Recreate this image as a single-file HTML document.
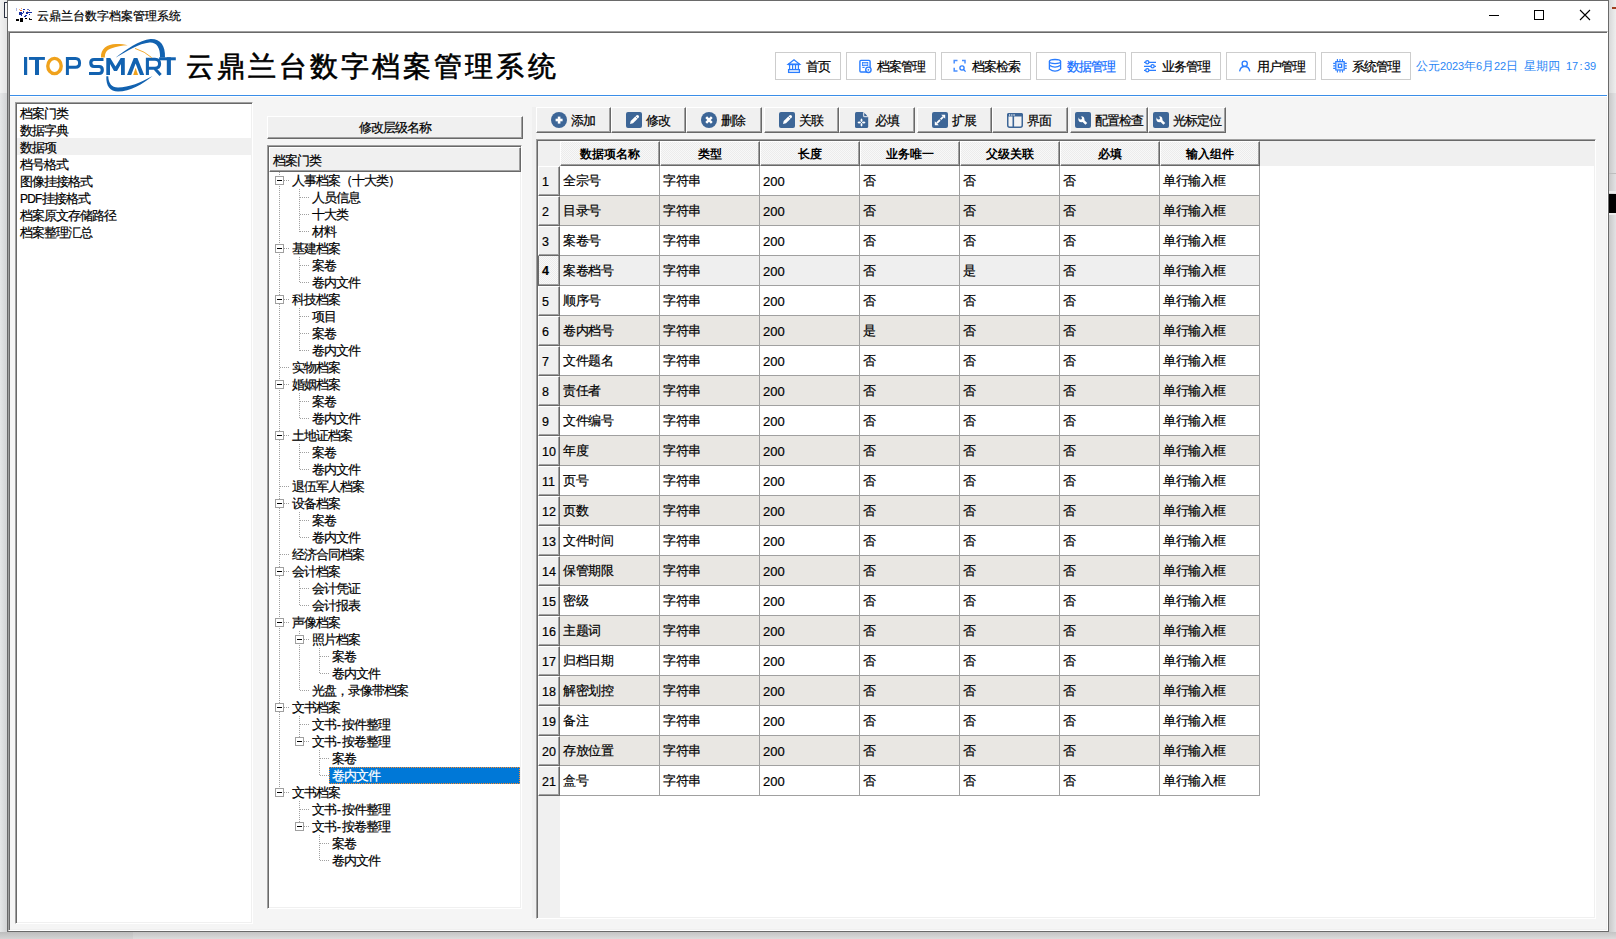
<!DOCTYPE html><html><head><meta charset="utf-8"><title>云鼎兰台数字档案管理系统</title><style>
html,body{margin:0;padding:0}
body{width:1616px;height:939px;position:relative;overflow:hidden;background:#e2e2e2;font-family:"Liberation Sans",sans-serif;font-size:12px;color:#000;-webkit-text-stroke:0.2px currentColor}
.a{position:absolute;box-sizing:border-box}
.t{position:absolute;white-space:nowrap;line-height:17px;font-size:13px;letter-spacing:-1px}
.l{font-size:13px;letter-spacing:0}
.l2{font-size:12px;letter-spacing:-0.8px;position:relative;top:-0.5px}
.nb{position:absolute;box-sizing:border-box;border:1px solid #cdcdcd;background:#fff;height:28px;top:52px}
.nb span{position:absolute;top:5px;line-height:17px;font-size:13px;letter-spacing:-1px;white-space:nowrap}
.nb svg{position:absolute}
.tb{position:absolute;box-sizing:border-box;top:107px;height:26px;background:#f0f0f0;border-top:1px solid #fff;border-left:1px solid #fff;box-shadow:inset -1px -1px 0 #a0a0a0;border-right:1px solid #696969;border-bottom:1px solid #696969}
.tb span{position:absolute;top:4px;line-height:17px;white-space:nowrap;font-size:13px;letter-spacing:-1px}
.tb svg{position:absolute;top:4px}
.tr{position:absolute;line-height:17px;height:17px;white-space:nowrap;font-size:13px;letter-spacing:-1px}
.hd{position:absolute;top:141px;height:25px;box-sizing:border-box;text-align:center;font-weight:bold;line-height:24px;font-size:12px;letter-spacing:0;-webkit-text-stroke:0;border-top:1px solid #fff;border-left:1px solid #fff;border-right:1px solid #696969;border-bottom:1px solid #696969;box-shadow:inset -1px -1px 0 #a0a0a0;background-color:#f4f4f4;background-image:repeating-conic-gradient(#ececec 0 25%,#f8f8f8 0 50%);background-size:2px 2px}
.ri{position:absolute;left:538px;width:22px;height:30px;box-sizing:border-box;background:#f0f0f0;border-top:1px solid #fff;border-left:1px solid #fff;border-right:1px solid #696969;border-bottom:1px solid #696969;box-shadow:inset -1px -1px 0 #a0a0a0;line-height:30px;padding-left:3px;font-size:12.5px}
.rw{position:absolute;left:560px;width:700px;height:30px}
.c{position:absolute;top:0;height:30px;width:100px;box-sizing:border-box;border-right:1px solid #a0a0a0;border-bottom:1px solid #a0a0a0;line-height:31px;padding-left:3px;white-space:nowrap;font-size:12.5px;letter-spacing:-0.5px}
</style></head><body>
<div class="a" style="left:0;top:0;width:7px;height:93px;background:linear-gradient(to right,#f2f2f2,#e4e4e4)"></div>
<div class="a" style="left:0;top:93px;width:7px;height:846px;background:linear-gradient(to right,#e6e7e8,#d2d3d4)"></div>
<div class="a" style="left:4px;top:2px;width:4px;height:16px;border:1px solid #2a3040;border-right:none;background:#f4f4f4"></div>
<div class="a" style="left:1609px;top:0;width:7px;height:93px;background:linear-gradient(to right,#d8d8d8,#eeeeee)"></div>
<div class="a" style="left:1609px;top:93px;width:7px;height:846px;background:linear-gradient(to right,#c8c8c8,#e2e2e4)"></div>
<div class="a" style="left:1609px;top:173px;width:7px;height:1px;background:#bdbdbd"></div>
<div class="a" style="left:1609px;top:191px;width:7px;height:2px;background:#ececec"></div>
<div class="a" style="left:1609px;top:194px;width:7px;height:19px;background:#000"></div>
<div class="a" style="left:1609px;top:213px;width:7px;height:2px;background:#ececec"></div>
<div class="a" style="left:1612px;top:7px;width:4px;height:2px;background:#a04020"></div>
<div class="a" style="left:0;top:932px;width:133px;height:7px;background:linear-gradient(to bottom,#bdbdbd,#d4d4d4)"></div>
<div class="a" style="left:133px;top:932px;width:1483px;height:7px;background:linear-gradient(to bottom,#c4c4c4,#dcdcdc)"></div>
<div class="a" style="left:7px;top:0;width:1602px;height:932px;border:1px solid #6a6a6a;background:#fff"></div>
<svg class="a" style="left:0;top:0" width="40" height="30"><rect x="16" y="8" width="1" height="3" fill="#aab4e0"/><rect x="19" y="9" width="1" height="1" fill="#f8b080"/><rect x="21" y="8" width="1" height="1" fill="#f4a070"/><rect x="20" y="10" width="2" height="1" fill="#f06020"/><rect x="19" y="12" width="3" height="3" fill="#1830a0"/><rect x="21" y="15" width="1" height="1" fill="#1830a0"/><rect x="23" y="11" width="1" height="2" fill="#2038a8"/><rect x="22" y="13" width="1" height="1" fill="#2038a8"/><rect x="23" y="9" width="2" height="1" fill="#1830a0"/><rect x="27" y="9" width="2" height="1" fill="#6070c0"/><rect x="29" y="10" width="1" height="1" fill="#3040a8"/><rect x="28" y="12" width="4" height="1" fill="#1830a0"/><rect x="26" y="12" width="2" height="2" fill="#1830a0"/><rect x="29" y="14" width="1" height="1" fill="#1830a0"/><rect x="25" y="15" width="2" height="1" fill="#2038a8"/><rect x="24" y="16" width="2" height="1" fill="#1830a0"/><rect x="27" y="11" width="1" height="1" fill="#f0a070"/><rect x="16" y="19" width="3" height="2" fill="#000"/><rect x="20" y="18" width="3" height="4" fill="#000"/><rect x="25" y="18" width="2" height="1" fill="#000"/><rect x="29" y="19" width="3" height="1" fill="#111"/><rect x="29" y="18" width="1" height="1" fill="#222"/></svg>
<div class="t" style="left:37px;top:8px;font-size:12px;letter-spacing:0">云鼎兰台数字档案管理系统</div>
<svg class="a" style="left:1480px;top:4px" width="120" height="24" viewBox="0 0 120 24"><rect x="9" y="11" width="10" height="1" fill="#000"/><rect x="54.5" y="6.5" width="9" height="9" fill="none" stroke="#000" stroke-width="1"/><path d="M100 6 L110 16 M110 6 L100 16" stroke="#000" stroke-width="1.1"/></svg>
<div class="a" style="left:8px;top:31px;width:1600px;height:900px;background:#f5f5f5;border-top:1px solid #a0a0a0;border-left:1px solid #a0a0a0;box-shadow:inset 1px 1px 0 #696969,inset -1px -1px 0 #f0f0f0;border-right:1px solid #fff;border-bottom:1px solid #fff"></div>
<div class="a" style="left:10px;top:33px;width:1597px;height:62px;background:#fff"></div>
<div class="a" style="left:10px;top:95px;width:1597px;height:1px;background:#3a8ee8"></div>
<div class="a" style="left:10px;top:96px;width:1597px;height:1px;background:#fff"></div>
<svg class="a" style="left:0;top:0" width="200" height="100" viewBox="0 0 200 100"><rect x="24" y="57" width="3.2" height="18" fill="#1262b0"/><rect x="28.9" y="57" width="16" height="2.9" fill="#1262b0"/><rect x="35" y="57" width="4" height="18" fill="#1262b0"/><ellipse cx="54.5" cy="66" rx="6.7" ry="7.6" fill="none" stroke="#f0a21c" stroke-width="3.4"/><path d="M67.4 75 V58.5 H75.5 Q79.6 58.5 79.6 63 Q79.6 67.3 75.5 67.3 H67.4" fill="none" stroke="#1262b0" stroke-width="3"/><path d="M103.5 59.5 H94 Q90.8 59.5 90.8 62.8 Q90.8 66.5 94 66.5 H99 Q102.3 66.5 102.3 70 Q102.3 73.5 99 73.5 H89" fill="none" stroke="#1262b0" stroke-width="3.2"/><path d="M106.3 75 V58 H110.3 L115.5 66.5 L120.7 58 H124.8 V75 H121 V64 L117 71 H114 L110 64 V75 Z" fill="#1262b0"/><path d="M127 75 L133.8 58 H137.4 L144.2 75 H140 L135.6 63.5 L131.2 75 Z" fill="#1262b0"/><path d="M133.2 75 L135.6 67.8 L138.1 75 Z" fill="#f0a21c"/><path d="M147.4 75 V59.3 H155 Q159.6 59.3 159.6 63.8 Q159.6 68.2 155 68.2 H147.4 M154.5 68.2 L160.6 75" fill="none" stroke="#1262b0" stroke-width="3.1"/><rect x="159.1" y="57.3" width="16.7" height="3" fill="#1262b0"/><rect x="166.8" y="57.3" width="4.1" height="17.7" fill="#1262b0"/><path d="M115.5 57.8 C125 50 140 40 150.5 39 C160 38.5 165.5 45 165 57.6 L160 57.6 C160.5 47 156 42 149.5 42.5 C139 43.5 127 51 115.5 57.8 Z" fill="#1262b0"/><path d="M106.3 76.2 C106 86 110 91.5 118 91.5 C130 91.5 143 84 152.5 76 C141 82.5 129 87.5 118 87.5 C111.5 87.5 108.5 83 108.3 76.2 Z" fill="#1262b0"/><path d="M101 57.6 C100.5 49 107 44 116 44 C121 44 125 44.5 127.8 45.3 C122 45.6 116 46.5 111 48.5 C106 50.5 105 53 104.8 57.6 Z" fill="#f0a21c"/><path d="M135 48.4 Q145 51.5 151.7 57.6" fill="none" stroke="#f0a21c" stroke-width="0.9"/></svg>
<div class="t" style="left:186px;top:47px;font-size:28px;line-height:40px;font-weight:normal;-webkit-text-stroke:0.6px #000;letter-spacing:3.05px">云鼎兰台数字档案管理系统</div>
<div class="nb" style="left:775px;width:66px"><span style="left:30px;color:#000">首页</span></div>
<div class="nb" style="left:846px;width:90px"><span style="left:30px;color:#000">档案管理</span></div>
<div class="nb" style="left:941px;width:90px"><span style="left:30px;color:#000">档案检索</span></div>
<div class="nb" style="left:1036px;width:90px"><span style="left:30px;color:#0f6dff">数据管理</span></div>
<div class="nb" style="left:1131px;width:90px"><span style="left:30px;color:#000">业务管理</span></div>
<div class="nb" style="left:1226px;width:90px"><span style="left:30px;color:#000">用户管理</span></div>
<div class="nb" style="left:1321px;width:90px"><span style="left:30px;color:#000">系统管理</span></div>
<svg class="a" style="left:0;top:0" width="1616" height="100" viewBox="0 0 1616 100"><path d="M788.3 64.3 L794 59.8 L799.7 64.3 Z" stroke="#2a7dff" fill="none" stroke-width="1.3"/><path d="M788 64.4 H800" stroke="#2a7dff" stroke-width="1.6"/><path d="M789.6 64.5 V69.5 M792.6 64.5 V69.5 M795.5 64.5 V69.5 M798.4 64.5 V69.5" stroke="#2a7dff" stroke-width="1.2"/><rect x="788.6" y="69.6" width="10.8" height="2.8" stroke="#2a7dff" fill="none" stroke-width="1.3"/><rect x="859.9" y="60.4" width="10.2" height="11.6" rx="1" stroke="#2a7dff" fill="none" stroke-width="1.4"/><rect x="862.4" y="62.4" width="5.4" height="3.2" fill="#b9d4ff" stroke="#2a7dff" stroke-width="0.8"/><path d="M862.4 67.4 H864.6" stroke="#2a7dff" stroke-width="1.2"/><circle cx="868.4" cy="69.8" r="2.7" fill="#fff" stroke="#2a7dff" stroke-width="1.4"/><circle cx="868.4" cy="69.8" r="0.9" fill="#2a7dff"/><path d="M954.2 63.6 V60.6 H957.5 M962 60.6 H965 V63.6 M954.2 67.8 V70.9 H957.5" stroke="#2a7dff" fill="none" stroke-width="1.5" opacity="0.85"/><circle cx="962" cy="68" r="2.1" stroke="#2a7dff" fill="none" stroke-width="1.3"/><path d="M963.5 69.5 L965.6 71.6" stroke="#2a7dff" stroke-width="1.3"/><ellipse cx="1055" cy="61.6" rx="5.6" ry="2.1" stroke="#2a7dff" fill="none" stroke-width="1.3"/><path d="M1049.4 61.6 V69 Q1055 73.2 1060.6 69 V61.6 M1049.4 65.3 Q1055 68.9 1060.6 65.3" stroke="#2a7dff" fill="none" stroke-width="1.3"/><path d="M1144 62.3 H1156 M1144 66.3 H1156 M1144 70.3 H1156" stroke="#2a7dff" stroke-width="1.2"/><circle cx="1147.3" cy="62.3" r="1.6" fill="#fff" stroke="#2a7dff" fill="none" stroke-width="1.3"/><circle cx="1152.6" cy="66.3" r="1.6" fill="#fff" stroke="#2a7dff" fill="none" stroke-width="1.3"/><circle cx="1147.3" cy="70.3" r="1.6" fill="#fff" stroke="#2a7dff" fill="none" stroke-width="1.3"/><circle cx="1244.7" cy="63.7" r="2.6" stroke="#2a7dff" fill="none" stroke-width="1.3"/><path d="M1239.6 71.3 Q1240.5 66.5 1244.7 66.5 Q1248.9 66.5 1249.8 71.3" stroke="#2a7dff" fill="none" stroke-width="1.3"/><rect x="1335.8" y="61.6" width="8.4" height="8.4" fill="#dbe9ff" stroke="#2a7dff" stroke-width="1.2"/><rect x="1338.4" y="64.2" width="3.2" height="3.2" fill="#fff" stroke="#2a7dff" stroke-width="1.2"/><path d="M1337.4 59 V61.3 M1340 59 V61.3 M1342.5 59 V61.3 M1337.4 70.3 V72.6 M1340 70.3 V72.6 M1342.5 70.3 V72.6 M1333.2 63.4 H1335.5 M1333.2 65.9 H1335.5 M1333.2 68.4 H1335.5 M1344.5 63.4 H1346.8 M1344.5 65.9 H1346.8 M1344.5 68.4 H1346.8" stroke="#2a7dff" stroke-width="1.1"/></svg>
<div class="a" style="left:1416px;top:58px;color:#2a86f5;-webkit-text-stroke:0;font-size:12px;line-height:17px;white-space:nowrap">公元<span style="display:inline-block;width:6px;text-align:center;font-size:11px">2</span><span style="display:inline-block;width:6px;text-align:center;font-size:11px">0</span><span style="display:inline-block;width:6px;text-align:center;font-size:11px">2</span><span style="display:inline-block;width:6px;text-align:center;font-size:11px">3</span>年<span style="display:inline-block;width:6px;text-align:center;font-size:11px">6</span>月<span style="display:inline-block;width:6px;text-align:center;font-size:11px">2</span><span style="display:inline-block;width:6px;text-align:center;font-size:11px">2</span>日<span style="display:inline-block;width:6px;text-align:center;font-size:11px">&nbsp;</span>星期四<span style="display:inline-block;width:6px;text-align:center;font-size:11px">&nbsp;</span><span style="display:inline-block;width:6px;text-align:center;font-size:11px">1</span><span style="display:inline-block;width:6px;text-align:center;font-size:11px">7</span><span style="display:inline-block;width:6px;text-align:center;font-size:11px">:</span><span style="display:inline-block;width:6px;text-align:center;font-size:11px">3</span><span style="display:inline-block;width:6px;text-align:center;font-size:11px">9</span></div>
<div class="a" style="left:15px;top:102px;width:238px;height:822px;background:#fff;border-top:1px solid #a0a0a0;border-left:1px solid #a0a0a0;box-shadow:inset 1px 1px 0 #696969,inset -1px -1px 0 #f0f0f0;border-right:1px solid #fff;border-bottom:1px solid #fff"></div>
<div class="t" style="left:20px;top:105px">档案门类</div>
<div class="t" style="left:20px;top:122px">数据字典</div>
<div class="a" style="left:17px;top:138px;width:235px;height:17px;background:#f0f0f0"></div>
<div class="t" style="left:20px;top:139px">数据项</div>
<div class="t" style="left:20px;top:156px">档号格式</div>
<div class="t" style="left:20px;top:173px">图像挂接格式</div>
<div class="t" style="left:20px;top:190px"><span class="l2">PDF</span>挂接格式</div>
<div class="t" style="left:20px;top:207px">档案原文存储路径</div>
<div class="t" style="left:20px;top:224px">档案整理汇总</div>
<div class="a" style="left:267px;top:116px;width:256px;height:23px;background:#f0f0f0;border-top:1px solid #fff;border-left:1px solid #fff;box-shadow:inset -1px -1px 0 #a0a0a0;border-right:1px solid #696969;border-bottom:1px solid #696969"></div>
<div class="t" style="left:267px;top:119px;width:256px;text-align:center">修改层级名称</div>
<div class="a" style="left:267px;top:145px;width:255px;height:764px;background:#fff;border-top:1px solid #a0a0a0;border-left:1px solid #a0a0a0;box-shadow:inset 1px 1px 0 #696969,inset -1px -1px 0 #f0f0f0;border-right:1px solid #fff;border-bottom:1px solid #fff"></div>
<div class="a" style="left:269px;top:147px;width:252px;height:25px;background:#f0f0f0;border-top:1px solid #fff;border-left:1px solid #fff;box-shadow:inset -1px -1px 0 #a0a0a0;border-right:1px solid #696969;border-bottom:1px solid #696969"></div>
<div class="t" style="left:273px;top:152px">档案门类</div>
<div class="a" style="left:279px;top:172px;width:1px;height:621px;background:repeating-linear-gradient(to bottom,#a0a0a0 0 1px,transparent 1px 2px)"></div><div class="a" style="left:299px;top:189px;width:1px;height:43px;background:repeating-linear-gradient(to bottom,#a0a0a0 0 1px,transparent 1px 2px)"></div><div class="a" style="left:299px;top:257px;width:1px;height:26px;background:repeating-linear-gradient(to bottom,#a0a0a0 0 1px,transparent 1px 2px)"></div><div class="a" style="left:299px;top:308px;width:1px;height:43px;background:repeating-linear-gradient(to bottom,#a0a0a0 0 1px,transparent 1px 2px)"></div><div class="a" style="left:299px;top:393px;width:1px;height:26px;background:repeating-linear-gradient(to bottom,#a0a0a0 0 1px,transparent 1px 2px)"></div><div class="a" style="left:299px;top:444px;width:1px;height:26px;background:repeating-linear-gradient(to bottom,#a0a0a0 0 1px,transparent 1px 2px)"></div><div class="a" style="left:299px;top:512px;width:1px;height:26px;background:repeating-linear-gradient(to bottom,#a0a0a0 0 1px,transparent 1px 2px)"></div><div class="a" style="left:299px;top:580px;width:1px;height:26px;background:repeating-linear-gradient(to bottom,#a0a0a0 0 1px,transparent 1px 2px)"></div><div class="a" style="left:299px;top:631px;width:1px;height:60px;background:repeating-linear-gradient(to bottom,#a0a0a0 0 1px,transparent 1px 2px)"></div><div class="a" style="left:319px;top:648px;width:1px;height:26px;background:repeating-linear-gradient(to bottom,#a0a0a0 0 1px,transparent 1px 2px)"></div><div class="a" style="left:299px;top:716px;width:1px;height:26px;background:repeating-linear-gradient(to bottom,#a0a0a0 0 1px,transparent 1px 2px)"></div><div class="a" style="left:319px;top:750px;width:1px;height:26px;background:repeating-linear-gradient(to bottom,#a0a0a0 0 1px,transparent 1px 2px)"></div><div class="a" style="left:299px;top:801px;width:1px;height:26px;background:repeating-linear-gradient(to bottom,#a0a0a0 0 1px,transparent 1px 2px)"></div><div class="a" style="left:319px;top:835px;width:1px;height:26px;background:repeating-linear-gradient(to bottom,#a0a0a0 0 1px,transparent 1px 2px)"></div><div class="a" style="left:280px;top:180px;width:9px;height:1px;background:repeating-linear-gradient(to right,#a0a0a0 0 1px,transparent 1px 2px)"></div><div class="a" style="left:300px;top:197px;width:9px;height:1px;background:repeating-linear-gradient(to right,#a0a0a0 0 1px,transparent 1px 2px)"></div><div class="a" style="left:300px;top:214px;width:9px;height:1px;background:repeating-linear-gradient(to right,#a0a0a0 0 1px,transparent 1px 2px)"></div><div class="a" style="left:300px;top:231px;width:9px;height:1px;background:repeating-linear-gradient(to right,#a0a0a0 0 1px,transparent 1px 2px)"></div><div class="a" style="left:280px;top:248px;width:9px;height:1px;background:repeating-linear-gradient(to right,#a0a0a0 0 1px,transparent 1px 2px)"></div><div class="a" style="left:300px;top:265px;width:9px;height:1px;background:repeating-linear-gradient(to right,#a0a0a0 0 1px,transparent 1px 2px)"></div><div class="a" style="left:300px;top:282px;width:9px;height:1px;background:repeating-linear-gradient(to right,#a0a0a0 0 1px,transparent 1px 2px)"></div><div class="a" style="left:280px;top:299px;width:9px;height:1px;background:repeating-linear-gradient(to right,#a0a0a0 0 1px,transparent 1px 2px)"></div><div class="a" style="left:300px;top:316px;width:9px;height:1px;background:repeating-linear-gradient(to right,#a0a0a0 0 1px,transparent 1px 2px)"></div><div class="a" style="left:300px;top:333px;width:9px;height:1px;background:repeating-linear-gradient(to right,#a0a0a0 0 1px,transparent 1px 2px)"></div><div class="a" style="left:300px;top:350px;width:9px;height:1px;background:repeating-linear-gradient(to right,#a0a0a0 0 1px,transparent 1px 2px)"></div><div class="a" style="left:280px;top:367px;width:9px;height:1px;background:repeating-linear-gradient(to right,#a0a0a0 0 1px,transparent 1px 2px)"></div><div class="a" style="left:280px;top:384px;width:9px;height:1px;background:repeating-linear-gradient(to right,#a0a0a0 0 1px,transparent 1px 2px)"></div><div class="a" style="left:300px;top:401px;width:9px;height:1px;background:repeating-linear-gradient(to right,#a0a0a0 0 1px,transparent 1px 2px)"></div><div class="a" style="left:300px;top:418px;width:9px;height:1px;background:repeating-linear-gradient(to right,#a0a0a0 0 1px,transparent 1px 2px)"></div><div class="a" style="left:280px;top:435px;width:9px;height:1px;background:repeating-linear-gradient(to right,#a0a0a0 0 1px,transparent 1px 2px)"></div><div class="a" style="left:300px;top:452px;width:9px;height:1px;background:repeating-linear-gradient(to right,#a0a0a0 0 1px,transparent 1px 2px)"></div><div class="a" style="left:300px;top:469px;width:9px;height:1px;background:repeating-linear-gradient(to right,#a0a0a0 0 1px,transparent 1px 2px)"></div><div class="a" style="left:280px;top:486px;width:9px;height:1px;background:repeating-linear-gradient(to right,#a0a0a0 0 1px,transparent 1px 2px)"></div><div class="a" style="left:280px;top:503px;width:9px;height:1px;background:repeating-linear-gradient(to right,#a0a0a0 0 1px,transparent 1px 2px)"></div><div class="a" style="left:300px;top:520px;width:9px;height:1px;background:repeating-linear-gradient(to right,#a0a0a0 0 1px,transparent 1px 2px)"></div><div class="a" style="left:300px;top:537px;width:9px;height:1px;background:repeating-linear-gradient(to right,#a0a0a0 0 1px,transparent 1px 2px)"></div><div class="a" style="left:280px;top:554px;width:9px;height:1px;background:repeating-linear-gradient(to right,#a0a0a0 0 1px,transparent 1px 2px)"></div><div class="a" style="left:280px;top:571px;width:9px;height:1px;background:repeating-linear-gradient(to right,#a0a0a0 0 1px,transparent 1px 2px)"></div><div class="a" style="left:300px;top:588px;width:9px;height:1px;background:repeating-linear-gradient(to right,#a0a0a0 0 1px,transparent 1px 2px)"></div><div class="a" style="left:300px;top:605px;width:9px;height:1px;background:repeating-linear-gradient(to right,#a0a0a0 0 1px,transparent 1px 2px)"></div><div class="a" style="left:280px;top:622px;width:9px;height:1px;background:repeating-linear-gradient(to right,#a0a0a0 0 1px,transparent 1px 2px)"></div><div class="a" style="left:300px;top:639px;width:9px;height:1px;background:repeating-linear-gradient(to right,#a0a0a0 0 1px,transparent 1px 2px)"></div><div class="a" style="left:320px;top:656px;width:9px;height:1px;background:repeating-linear-gradient(to right,#a0a0a0 0 1px,transparent 1px 2px)"></div><div class="a" style="left:320px;top:673px;width:9px;height:1px;background:repeating-linear-gradient(to right,#a0a0a0 0 1px,transparent 1px 2px)"></div><div class="a" style="left:300px;top:690px;width:9px;height:1px;background:repeating-linear-gradient(to right,#a0a0a0 0 1px,transparent 1px 2px)"></div><div class="a" style="left:280px;top:707px;width:9px;height:1px;background:repeating-linear-gradient(to right,#a0a0a0 0 1px,transparent 1px 2px)"></div><div class="a" style="left:300px;top:724px;width:9px;height:1px;background:repeating-linear-gradient(to right,#a0a0a0 0 1px,transparent 1px 2px)"></div><div class="a" style="left:300px;top:741px;width:9px;height:1px;background:repeating-linear-gradient(to right,#a0a0a0 0 1px,transparent 1px 2px)"></div><div class="a" style="left:320px;top:758px;width:9px;height:1px;background:repeating-linear-gradient(to right,#a0a0a0 0 1px,transparent 1px 2px)"></div><div class="a" style="left:320px;top:775px;width:9px;height:1px;background:repeating-linear-gradient(to right,#a0a0a0 0 1px,transparent 1px 2px)"></div><div class="a" style="left:280px;top:792px;width:9px;height:1px;background:repeating-linear-gradient(to right,#a0a0a0 0 1px,transparent 1px 2px)"></div><div class="a" style="left:300px;top:809px;width:9px;height:1px;background:repeating-linear-gradient(to right,#a0a0a0 0 1px,transparent 1px 2px)"></div><div class="a" style="left:300px;top:826px;width:9px;height:1px;background:repeating-linear-gradient(to right,#a0a0a0 0 1px,transparent 1px 2px)"></div><div class="a" style="left:320px;top:843px;width:9px;height:1px;background:repeating-linear-gradient(to right,#a0a0a0 0 1px,transparent 1px 2px)"></div><div class="a" style="left:320px;top:860px;width:9px;height:1px;background:repeating-linear-gradient(to right,#a0a0a0 0 1px,transparent 1px 2px)"></div>
<div class="a" style="left:275px;top:176px;width:9px;height:9px;border:1px solid #a0a0a0;background:#fff"></div><div class="a" style="left:277px;top:180px;width:5px;height:1px;background:#000"></div>
<div class="tr" style="left:292px;top:172px">人事档案（十大类）</div>
<div class="tr" style="left:312px;top:189px">人员信息</div>
<div class="tr" style="left:312px;top:206px">十大类</div>
<div class="tr" style="left:312px;top:223px">材料</div>
<div class="a" style="left:275px;top:244px;width:9px;height:9px;border:1px solid #a0a0a0;background:#fff"></div><div class="a" style="left:277px;top:248px;width:5px;height:1px;background:#000"></div>
<div class="tr" style="left:292px;top:240px">基建档案</div>
<div class="tr" style="left:312px;top:257px">案卷</div>
<div class="tr" style="left:312px;top:274px">卷内文件</div>
<div class="a" style="left:275px;top:295px;width:9px;height:9px;border:1px solid #a0a0a0;background:#fff"></div><div class="a" style="left:277px;top:299px;width:5px;height:1px;background:#000"></div>
<div class="tr" style="left:292px;top:291px">科技档案</div>
<div class="tr" style="left:312px;top:308px">项目</div>
<div class="tr" style="left:312px;top:325px">案卷</div>
<div class="tr" style="left:312px;top:342px">卷内文件</div>
<div class="tr" style="left:292px;top:359px">实物档案</div>
<div class="a" style="left:275px;top:380px;width:9px;height:9px;border:1px solid #a0a0a0;background:#fff"></div><div class="a" style="left:277px;top:384px;width:5px;height:1px;background:#000"></div>
<div class="tr" style="left:292px;top:376px">婚姻档案</div>
<div class="tr" style="left:312px;top:393px">案卷</div>
<div class="tr" style="left:312px;top:410px">卷内文件</div>
<div class="a" style="left:275px;top:431px;width:9px;height:9px;border:1px solid #a0a0a0;background:#fff"></div><div class="a" style="left:277px;top:435px;width:5px;height:1px;background:#000"></div>
<div class="tr" style="left:292px;top:427px">土地证档案</div>
<div class="tr" style="left:312px;top:444px">案卷</div>
<div class="tr" style="left:312px;top:461px">卷内文件</div>
<div class="tr" style="left:292px;top:478px">退伍军人档案</div>
<div class="a" style="left:275px;top:499px;width:9px;height:9px;border:1px solid #a0a0a0;background:#fff"></div><div class="a" style="left:277px;top:503px;width:5px;height:1px;background:#000"></div>
<div class="tr" style="left:292px;top:495px">设备档案</div>
<div class="tr" style="left:312px;top:512px">案卷</div>
<div class="tr" style="left:312px;top:529px">卷内文件</div>
<div class="tr" style="left:292px;top:546px">经济合同档案</div>
<div class="a" style="left:275px;top:567px;width:9px;height:9px;border:1px solid #a0a0a0;background:#fff"></div><div class="a" style="left:277px;top:571px;width:5px;height:1px;background:#000"></div>
<div class="tr" style="left:292px;top:563px">会计档案</div>
<div class="tr" style="left:312px;top:580px">会计凭证</div>
<div class="tr" style="left:312px;top:597px">会计报表</div>
<div class="a" style="left:275px;top:618px;width:9px;height:9px;border:1px solid #a0a0a0;background:#fff"></div><div class="a" style="left:277px;top:622px;width:5px;height:1px;background:#000"></div>
<div class="tr" style="left:292px;top:614px">声像档案</div>
<div class="a" style="left:295px;top:635px;width:9px;height:9px;border:1px solid #a0a0a0;background:#fff"></div><div class="a" style="left:297px;top:639px;width:5px;height:1px;background:#000"></div>
<div class="tr" style="left:312px;top:631px">照片档案</div>
<div class="tr" style="left:332px;top:648px">案卷</div>
<div class="tr" style="left:332px;top:665px">卷内文件</div>
<div class="tr" style="left:312px;top:682px">光盘，录像带档案</div>
<div class="a" style="left:275px;top:703px;width:9px;height:9px;border:1px solid #a0a0a0;background:#fff"></div><div class="a" style="left:277px;top:707px;width:5px;height:1px;background:#000"></div>
<div class="tr" style="left:292px;top:699px">文书档案</div>
<div class="tr" style="left:312px;top:716px">文书<span class="l" style="display:inline-block;width:6px;text-align:center">-</span>按件整理</div>
<div class="a" style="left:295px;top:737px;width:9px;height:9px;border:1px solid #a0a0a0;background:#fff"></div><div class="a" style="left:297px;top:741px;width:5px;height:1px;background:#000"></div>
<div class="tr" style="left:312px;top:733px">文书<span class="l" style="display:inline-block;width:6px;text-align:center">-</span>按卷整理</div>
<div class="tr" style="left:332px;top:750px">案卷</div>
<div class="a" style="left:329px;top:767px;width:191px;height:17px;background:#0078d7;outline:1px dotted #ff8a28;outline-offset:-1px"></div>
<div class="tr" style="left:332px;top:767px;color:#fff">卷内文件</div>
<div class="a" style="left:275px;top:788px;width:9px;height:9px;border:1px solid #a0a0a0;background:#fff"></div><div class="a" style="left:277px;top:792px;width:5px;height:1px;background:#000"></div>
<div class="tr" style="left:292px;top:784px">文书档案</div>
<div class="tr" style="left:312px;top:801px">文书<span class="l" style="display:inline-block;width:6px;text-align:center">-</span>按件整理</div>
<div class="a" style="left:295px;top:822px;width:9px;height:9px;border:1px solid #a0a0a0;background:#fff"></div><div class="a" style="left:297px;top:826px;width:5px;height:1px;background:#000"></div>
<div class="tr" style="left:312px;top:818px">文书<span class="l" style="display:inline-block;width:6px;text-align:center">-</span>按卷整理</div>
<div class="tr" style="left:332px;top:835px">案卷</div>
<div class="tr" style="left:332px;top:852px">卷内文件</div>
<div class="a" style="left:532px;top:107px;width:4px;height:811px;background:#f0f0f0"></div>
<div class="tb" style="left:536px;width:75px"><svg style="left:14px" width="16" height="16" viewBox="0 0 16 16"><circle cx="8" cy="8" r="8" fill="#3d6697"/><rect x="4.6" y="6.7" width="7" height="2.6" fill="#fff"/><rect x="6.8" y="4.6" width="2.6" height="7" fill="#fff"/></svg><span style="left:34px">添加</span></div>
<div class="tb" style="left:611px;width:75px"><svg style="left:14px" width="16" height="16" viewBox="0 0 16 16"><rect x="0" y="0" width="16" height="16" rx="2" fill="#3d6697"/><path d="M4 12 L4.7 9 L10.3 3.4 Q11.5 2.5 12.6 3.6 Q13.5 4.7 12.6 5.7 L7 11.3 Z" fill="#fff"/><path d="M9.4 4.4 L11.6 6.6" stroke="#3d6697" stroke-width="0.7"/></svg><span style="left:34px">修改</span></div>
<div class="tb" style="left:686px;width:76px"><svg style="left:14px" width="16" height="16" viewBox="0 0 16 16"><circle cx="8" cy="8" r="8" fill="#3d6697"/><path d="M5.2 5.2 L10.8 10.8 M10.8 5.2 L5.2 10.8" stroke="#fff" stroke-width="2.5"/></svg><span style="left:34px">删除</span></div>
<div class="tb" style="left:764px;width:75px"><svg style="left:14px" width="16" height="16" viewBox="0 0 16 16"><rect x="0" y="0" width="16" height="16" rx="2" fill="#3d6697"/><path d="M4 12 L4.7 9 L10.3 3.4 Q11.5 2.5 12.6 3.6 Q13.5 4.7 12.6 5.7 L7 11.3 Z" fill="#fff"/><path d="M9.4 4.4 L11.6 6.6" stroke="#3d6697" stroke-width="0.7"/></svg><span style="left:34px">关联</span></div>
<div class="tb" style="left:839px;width:76px"><svg style="left:15px" width="16" height="16" viewBox="0 0 16 16"><path d="M1.5 0 H8.2 L13.2 5 V14.5 Q13.2 16 11.7 16 H1.5 Q0 16 0 14.5 V1.5 Q0 0 1.5 0 Z" fill="#3d6697"/><path d="M8.6 0.3 V3.4 Q8.6 4.6 9.8 4.6 H13" fill="none" stroke="#cfd7e2" stroke-width="1.3"/><path d="M9.8 1.6 L12 3.6 H9.8 Z" fill="#3d6697"/><ellipse cx="6.5" cy="8.3" rx="0.9" ry="1.7" fill="#fff"/><ellipse cx="6.5" cy="12.7" rx="0.9" ry="1.7" fill="#fff"/><ellipse cx="4.3" cy="10.5" rx="1.7" ry="0.9" fill="#fff"/><ellipse cx="8.7" cy="10.5" rx="1.7" ry="0.9" fill="#fff"/></svg><span style="left:35px">必填</span></div>
<div class="tb" style="left:917px;width:75px"><svg style="left:14px" width="16" height="16" viewBox="0 0 16 16"><rect x="0" y="0" width="16" height="16" rx="2" fill="#3d6697"/><path d="M9.2 2.8 H13.2 V6.8 Z M2.8 9.2 V13.2 H6.8 Z" fill="#fff"/><path d="M4.8 11.2 L8 8 M8.6 7.4 L11.2 4.8" stroke="#fff" stroke-width="1.8"/></svg><span style="left:34px">扩展</span></div>
<div class="tb" style="left:992px;width:76px"><svg style="left:14px" width="16" height="16" viewBox="0 0 16 16"><rect x="0.75" y="1.75" width="14.5" height="13.5" rx="2" fill="#f4f4f4" stroke="#3d6697" stroke-width="1.5"/><rect x="0" y="1" width="16" height="3.6" rx="1.5" fill="#3d6697"/><rect x="2" y="2.3" width="1.2" height="1.4" fill="#dfe5ee"/><rect x="4.2" y="2.3" width="1.2" height="1.4" fill="#dfe5ee"/><rect x="6.2" y="2.3" width="1.8" height="1.4" fill="#b8c6d8"/><rect x="5.5" y="4" width="1.6" height="11" fill="#3d6697"/></svg><span style="left:34px">界面</span></div>
<div class="tb" style="left:1070px;width:78px"><svg style="left:4px" width="16" height="16" viewBox="0 0 16 16"><rect x="0" y="0" width="16" height="16" rx="2" fill="#3d6697"/><path d="M8 8.6 L11.3 11.9" stroke="#fff" stroke-width="2.6"/><circle cx="6.4" cy="7.2" r="3" fill="#fff"/><circle cx="5.6" cy="6.3" r="1.3" fill="#3d6697"/><path d="M5 6.8 L3.3 5.1 L5.1 3.3 L6.8 5 Z" fill="#3d6697"/></svg><span style="left:24px">配置检查</span></div>
<div class="tb" style="left:1148px;width:78px"><svg style="left:4px" width="16" height="16" viewBox="0 0 16 16"><rect x="0" y="0" width="16" height="16" rx="2" fill="#3d6697"/><path d="M8 8.6 L11.3 11.9" stroke="#fff" stroke-width="2.6"/><circle cx="6.4" cy="7.2" r="3" fill="#fff"/><circle cx="5.6" cy="6.3" r="1.3" fill="#3d6697"/><path d="M5 6.8 L3.3 5.1 L5.1 3.3 L6.8 5 Z" fill="#3d6697"/></svg><span style="left:24px">光标定位</span></div>
<div class="a" style="left:536px;top:139px;width:1060px;height:780px;background:#fff;border-top:1px solid #a0a0a0;border-left:1px solid #a0a0a0;box-shadow:inset 1px 1px 0 #696969,inset -1px -1px 0 #f0f0f0;border-right:1px solid #fff;border-bottom:1px solid #fff"></div>
<div class="a" style="left:538px;top:141px;width:1056px;height:25px;background:#f0f0f0"></div>
<div class="a" style="left:538px;top:796px;width:22px;height:121px;background:#f0f0f0"></div>
<div class="hd" style="left:560px;width:100px">数据项名称</div>
<div class="hd" style="left:660px;width:100px">类型</div>
<div class="hd" style="left:760px;width:100px">长度</div>
<div class="hd" style="left:860px;width:100px">业务唯一</div>
<div class="hd" style="left:960px;width:100px">父级关联</div>
<div class="hd" style="left:1060px;width:100px">必填</div>
<div class="hd" style="left:1160px;width:100px">输入组件</div>
<div class="ri" style="top:166px">1</div>
<div class="rw" style="top:166px;background:#fff"><div class="c" style="left:0px">全宗号</div><div class="c" style="left:100px">字符串</div><div class="c" style="left:200px"><span class="l">200</span></div><div class="c" style="left:300px">否</div><div class="c" style="left:400px">否</div><div class="c" style="left:500px">否</div><div class="c" style="left:600px">单行输入框</div></div>
<div class="ri" style="top:196px">2</div>
<div class="rw" style="top:196px;background:#e9e7e3"><div class="c" style="left:0px">目录号</div><div class="c" style="left:100px">字符串</div><div class="c" style="left:200px"><span class="l">200</span></div><div class="c" style="left:300px">否</div><div class="c" style="left:400px">否</div><div class="c" style="left:500px">否</div><div class="c" style="left:600px">单行输入框</div></div>
<div class="ri" style="top:226px">3</div>
<div class="rw" style="top:226px;background:#fff"><div class="c" style="left:0px">案卷号</div><div class="c" style="left:100px">字符串</div><div class="c" style="left:200px"><span class="l">200</span></div><div class="c" style="left:300px">否</div><div class="c" style="left:400px">否</div><div class="c" style="left:500px">否</div><div class="c" style="left:600px">单行输入框</div></div>
<div class="ri" style="top:256px;font-weight:bold;border-top:none;border-left:1px solid #696969;background-color:#f4f4f4;background-image:repeating-conic-gradient(#ececec 0 25%,#f8f8f8 0 50%);background-size:2px 2px">4</div>
<div class="rw" style="top:256px;background:#efefef"><div class="c" style="left:0px">案卷档号</div><div class="c" style="left:100px">字符串</div><div class="c" style="left:200px"><span class="l">200</span></div><div class="c" style="left:300px">否</div><div class="c" style="left:400px">是</div><div class="c" style="left:500px">否</div><div class="c" style="left:600px">单行输入框</div></div>
<div class="ri" style="top:286px">5</div>
<div class="rw" style="top:286px;background:#fff"><div class="c" style="left:0px">顺序号</div><div class="c" style="left:100px">字符串</div><div class="c" style="left:200px"><span class="l">200</span></div><div class="c" style="left:300px">否</div><div class="c" style="left:400px">否</div><div class="c" style="left:500px">否</div><div class="c" style="left:600px">单行输入框</div></div>
<div class="ri" style="top:316px">6</div>
<div class="rw" style="top:316px;background:#e9e7e3"><div class="c" style="left:0px">卷内档号</div><div class="c" style="left:100px">字符串</div><div class="c" style="left:200px"><span class="l">200</span></div><div class="c" style="left:300px">是</div><div class="c" style="left:400px">否</div><div class="c" style="left:500px">否</div><div class="c" style="left:600px">单行输入框</div></div>
<div class="ri" style="top:346px">7</div>
<div class="rw" style="top:346px;background:#fff"><div class="c" style="left:0px">文件题名</div><div class="c" style="left:100px">字符串</div><div class="c" style="left:200px"><span class="l">200</span></div><div class="c" style="left:300px">否</div><div class="c" style="left:400px">否</div><div class="c" style="left:500px">否</div><div class="c" style="left:600px">单行输入框</div></div>
<div class="ri" style="top:376px">8</div>
<div class="rw" style="top:376px;background:#e9e7e3"><div class="c" style="left:0px">责任者</div><div class="c" style="left:100px">字符串</div><div class="c" style="left:200px"><span class="l">200</span></div><div class="c" style="left:300px">否</div><div class="c" style="left:400px">否</div><div class="c" style="left:500px">否</div><div class="c" style="left:600px">单行输入框</div></div>
<div class="ri" style="top:406px">9</div>
<div class="rw" style="top:406px;background:#fff"><div class="c" style="left:0px">文件编号</div><div class="c" style="left:100px">字符串</div><div class="c" style="left:200px"><span class="l">200</span></div><div class="c" style="left:300px">否</div><div class="c" style="left:400px">否</div><div class="c" style="left:500px">否</div><div class="c" style="left:600px">单行输入框</div></div>
<div class="ri" style="top:436px">10</div>
<div class="rw" style="top:436px;background:#e9e7e3"><div class="c" style="left:0px">年度</div><div class="c" style="left:100px">字符串</div><div class="c" style="left:200px"><span class="l">200</span></div><div class="c" style="left:300px">否</div><div class="c" style="left:400px">否</div><div class="c" style="left:500px">否</div><div class="c" style="left:600px">单行输入框</div></div>
<div class="ri" style="top:466px">11</div>
<div class="rw" style="top:466px;background:#fff"><div class="c" style="left:0px">页号</div><div class="c" style="left:100px">字符串</div><div class="c" style="left:200px"><span class="l">200</span></div><div class="c" style="left:300px">否</div><div class="c" style="left:400px">否</div><div class="c" style="left:500px">否</div><div class="c" style="left:600px">单行输入框</div></div>
<div class="ri" style="top:496px">12</div>
<div class="rw" style="top:496px;background:#e9e7e3"><div class="c" style="left:0px">页数</div><div class="c" style="left:100px">字符串</div><div class="c" style="left:200px"><span class="l">200</span></div><div class="c" style="left:300px">否</div><div class="c" style="left:400px">否</div><div class="c" style="left:500px">否</div><div class="c" style="left:600px">单行输入框</div></div>
<div class="ri" style="top:526px">13</div>
<div class="rw" style="top:526px;background:#fff"><div class="c" style="left:0px">文件时间</div><div class="c" style="left:100px">字符串</div><div class="c" style="left:200px"><span class="l">200</span></div><div class="c" style="left:300px">否</div><div class="c" style="left:400px">否</div><div class="c" style="left:500px">否</div><div class="c" style="left:600px">单行输入框</div></div>
<div class="ri" style="top:556px">14</div>
<div class="rw" style="top:556px;background:#e9e7e3"><div class="c" style="left:0px">保管期限</div><div class="c" style="left:100px">字符串</div><div class="c" style="left:200px"><span class="l">200</span></div><div class="c" style="left:300px">否</div><div class="c" style="left:400px">否</div><div class="c" style="left:500px">否</div><div class="c" style="left:600px">单行输入框</div></div>
<div class="ri" style="top:586px">15</div>
<div class="rw" style="top:586px;background:#fff"><div class="c" style="left:0px">密级</div><div class="c" style="left:100px">字符串</div><div class="c" style="left:200px"><span class="l">200</span></div><div class="c" style="left:300px">否</div><div class="c" style="left:400px">否</div><div class="c" style="left:500px">否</div><div class="c" style="left:600px">单行输入框</div></div>
<div class="ri" style="top:616px">16</div>
<div class="rw" style="top:616px;background:#e9e7e3"><div class="c" style="left:0px">主题词</div><div class="c" style="left:100px">字符串</div><div class="c" style="left:200px"><span class="l">200</span></div><div class="c" style="left:300px">否</div><div class="c" style="left:400px">否</div><div class="c" style="left:500px">否</div><div class="c" style="left:600px">单行输入框</div></div>
<div class="ri" style="top:646px">17</div>
<div class="rw" style="top:646px;background:#fff"><div class="c" style="left:0px">归档日期</div><div class="c" style="left:100px">字符串</div><div class="c" style="left:200px"><span class="l">200</span></div><div class="c" style="left:300px">否</div><div class="c" style="left:400px">否</div><div class="c" style="left:500px">否</div><div class="c" style="left:600px">单行输入框</div></div>
<div class="ri" style="top:676px">18</div>
<div class="rw" style="top:676px;background:#e9e7e3"><div class="c" style="left:0px">解密划控</div><div class="c" style="left:100px">字符串</div><div class="c" style="left:200px"><span class="l">200</span></div><div class="c" style="left:300px">否</div><div class="c" style="left:400px">否</div><div class="c" style="left:500px">否</div><div class="c" style="left:600px">单行输入框</div></div>
<div class="ri" style="top:706px">19</div>
<div class="rw" style="top:706px;background:#fff"><div class="c" style="left:0px">备注</div><div class="c" style="left:100px">字符串</div><div class="c" style="left:200px"><span class="l">200</span></div><div class="c" style="left:300px">否</div><div class="c" style="left:400px">否</div><div class="c" style="left:500px">否</div><div class="c" style="left:600px">单行输入框</div></div>
<div class="ri" style="top:736px">20</div>
<div class="rw" style="top:736px;background:#e9e7e3"><div class="c" style="left:0px">存放位置</div><div class="c" style="left:100px">字符串</div><div class="c" style="left:200px"><span class="l">200</span></div><div class="c" style="left:300px">否</div><div class="c" style="left:400px">否</div><div class="c" style="left:500px">否</div><div class="c" style="left:600px">单行输入框</div></div>
<div class="ri" style="top:766px">21</div>
<div class="rw" style="top:766px;background:#fff"><div class="c" style="left:0px">盒号</div><div class="c" style="left:100px">字符串</div><div class="c" style="left:200px"><span class="l">200</span></div><div class="c" style="left:300px">否</div><div class="c" style="left:400px">否</div><div class="c" style="left:500px">否</div><div class="c" style="left:600px">单行输入框</div></div>
</body></html>
